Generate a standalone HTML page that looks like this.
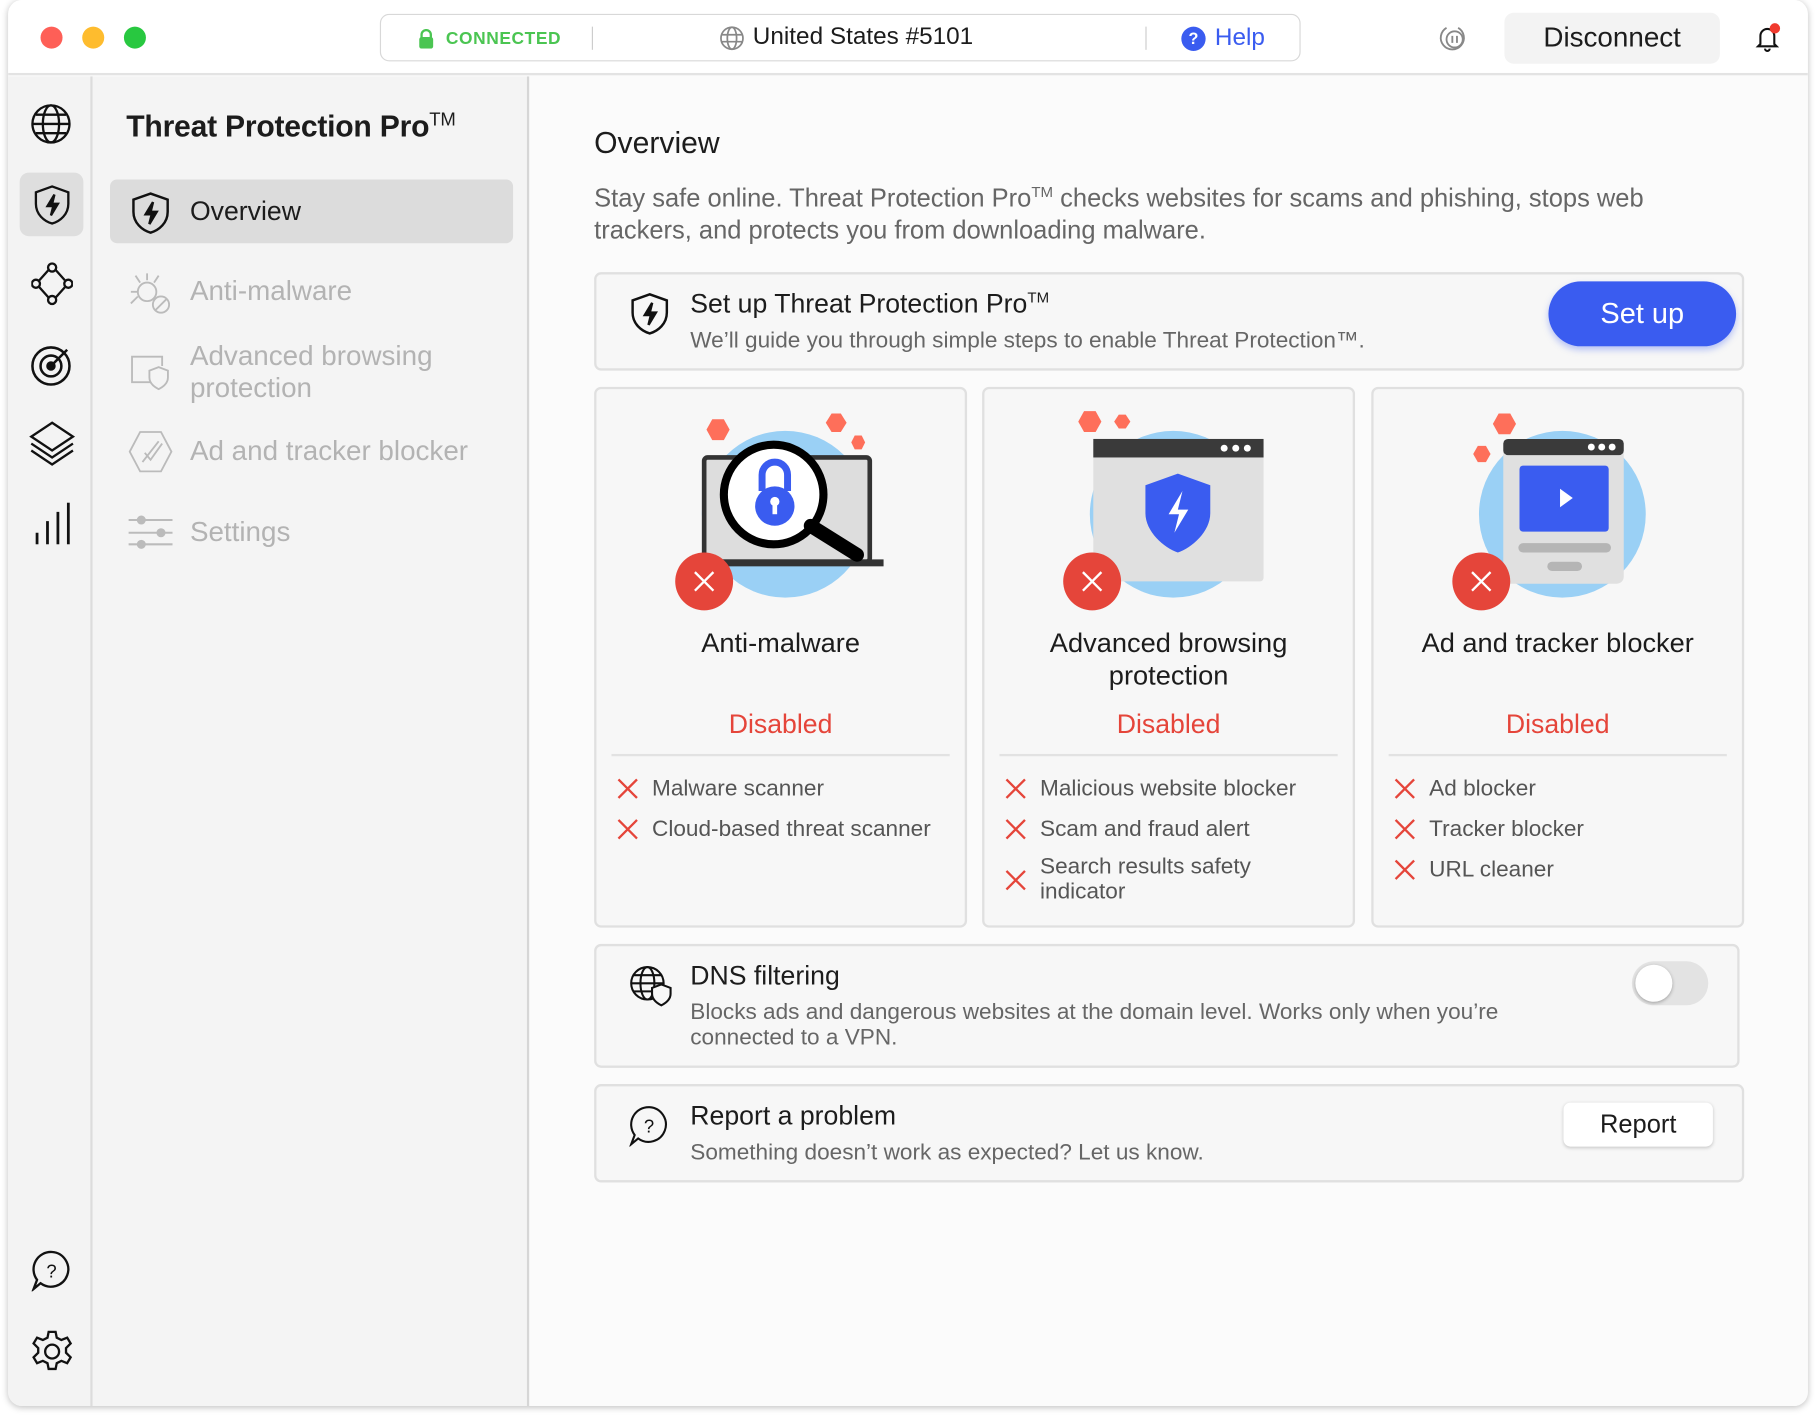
<!DOCTYPE html>
<html><head><meta charset="utf-8">
<style>
*{box-sizing:border-box;margin:0;padding:0}
html,body{width:1816px;height:1416px;overflow:hidden;background:#fff}
#s{position:absolute;left:0;top:0;width:1568px;height:1223px;transform:scale(1.15816);transform-origin:0 0;font-family:"Liberation Sans",sans-serif;color:#1c1c1c}
.win{position:absolute;left:7px;top:0;width:1554px;height:1214px;border-radius:12px;background:#fbfbfb;box-shadow:0 1px 6px rgba(0,0,0,.25);overflow:hidden}
.tb{position:absolute;left:0;top:0;width:100%;height:65px;background:#fff;border-bottom:2px solid #e3e3e3}
.dot{position:absolute;top:23px;width:19px;height:19px;border-radius:50%}
.pill{position:absolute;left:321px;top:12px;width:795px;height:41px;border:1px solid #d8d8d8;border-radius:8px;background:#fff}
.rail{position:absolute;left:0;top:66px;width:73px;bottom:0;background:#f3f3f3;border-right:2px solid #dcdcdc}
.side{position:absolute;left:73px;top:66px;width:377px;bottom:0;background:#f4f4f4;border-right:2px solid #d6d6d6}
.main{position:absolute;left:450px;top:66px;right:0;bottom:0;background:#fbfbfb}
.ab{position:absolute}
.si{position:absolute;left:30px;font-size:24px;color:#b3b3b3;line-height:28px}
.card{position:absolute;background:#f7f7f7;border:2px solid #e0e0e0;border-radius:6px}
.ft{position:absolute;left:0;width:100%;text-align:center;font-size:23.5px;line-height:28px}
.dis{position:absolute;left:0;width:100%;text-align:center;font-size:23px;color:#e5453a;top:276px}
.hr{position:absolute;left:13px;right:13px;top:315px;height:2px;background:#e2e2e2}
.li{position:absolute;left:48px;font-size:19.5px;color:#555;line-height:22px}
.x{position:absolute;left:18px;width:18px;height:18px}
</style></head><body><div id="s">
<div class="win">
<div class="tb">
 <div class="dot" style="left:28px;background:#fe5f57"></div>
 <div class="dot" style="left:64px;background:#febc2e"></div>
 <div class="dot" style="left:100px;background:#28c840"></div>
 <div class="pill">
  <svg class="ab" style="left:32px;top:12px" width="14" height="17" viewBox="0 0 14 17"><path d="M3 8V5a4 4 0 0 1 8 0v3" stroke="#4bc552" stroke-width="2" fill="none"/><rect x="1" y="7" width="12" height="10" rx="2" fill="#4bc552"/></svg>
  <div class="ab" style="left:56px;top:12px;font-size:15px;font-weight:bold;color:#4bc552;letter-spacing:.5px">CONNECTED</div>
  <div class="ab" style="left:182px;top:10px;width:1px;height:20px;background:#ccc"></div>
  <svg class="ab" style="left:292px;top:9px" width="22" height="22" viewBox="0 0 22 22" fill="none" stroke="#888" stroke-width="1.5"><circle cx="11" cy="11" r="9.5"/><ellipse cx="11" cy="11" rx="4" ry="9.5"/><path d="M2 8h18M2 14h18"/></svg>
  <div class="ab" style="left:321px;top:7px;font-size:21px">United States #5101</div>
  <div class="ab" style="left:660px;top:10px;width:1px;height:20px;background:#ccc"></div>
  <div class="ab" style="left:691px;top:10px;width:21px;height:21px;border-radius:50%;background:#3a5cf0;color:#fff;font-size:14px;font-weight:bold;text-align:center;line-height:21px">?</div>
  <div class="ab" style="left:720px;top:8px;font-size:21px;color:#3a5cf0">Help</div>
 </div>
 <svg class="ab" style="left:1234px;top:20px" width="28" height="26" viewBox="0 0 28 26" fill="none" stroke="#888" stroke-width="1.6"><path d="M8 4a10 10 0 1 0 10 0"/><circle cx="15" cy="14" r="7"/><path d="M13 11v6M17 11v6"/></svg>
 <div class="ab" style="left:1292px;top:11px;width:186px;height:44px;background:#f3f3f3;border-radius:8px;font-size:24px;text-align:center;line-height:44px">Disconnect</div>
 <svg class="ab" style="left:1508px;top:20px" width="24" height="26" viewBox="0 0 24 26" fill="none" stroke="#111" stroke-width="1.8"><path d="M5 18V11a6 6 0 0 1 12 0v7l2 2H3z"/><path d="M9 22a2 2 0 0 0 4 0"/></svg>
 <div class="ab" style="left:1521px;top:20px;width:9px;height:9px;border-radius:50%;background:#f03a2e"></div>
</div>
<div class="rail">
 <svg class="ab" style="left:19px;top:23px" width="36" height="36" viewBox="0 0 36 36" fill="none" stroke="#111" stroke-width="2"><circle cx="18" cy="18" r="16"/><ellipse cx="18" cy="18" rx="7" ry="16"/><path d="M2 18h32M5 10h26M5 26h26"/></svg>
 <div class="ab" style="left:10px;top:83px;width:55px;height:55px;border-radius:8px;background:#dedede"></div>
 <svg class="ab" style="left:22px;top:93px" width="32" height="36" viewBox="0 0 32 36" fill="none" stroke="#111" stroke-width="2"><path d="M16 2L30 7v10c0 9-7 15-14 17C9 32 2 26 2 17V7z"/><path d="M18 9l-6 10h5l-2 8 6-10h-5z" fill="#111"/></svg>
 <svg class="ab" style="left:20px;top:160px" width="36" height="38" viewBox="0 0 36 38" fill="none" stroke="#111" stroke-width="2"><circle cx="18" cy="5" r="3.5"/><circle cx="4" cy="19" r="3.5"/><circle cx="32" cy="19" r="3.5"/><circle cx="18" cy="33" r="3.5"/><path d="M15 7L7 16M21 7l8 9M7 22l8 9M29 22l-8 9"/></svg>
 <svg class="ab" style="left:19px;top:230px" width="38" height="38" viewBox="0 0 38 38" fill="none" stroke="#111" stroke-width="2.2"><circle cx="18" cy="20" r="16"/><circle cx="18" cy="20" r="9"/><circle cx="18" cy="20" r="3" fill="#111"/><path d="M18 20L32 6"/></svg>
 <svg class="ab" style="left:17px;top:296px" width="42" height="42" viewBox="0 0 42 42" fill="none" stroke="#111" stroke-width="2"><path d="M21 3L39 15 21 27 3 15z"/><path d="M3 21l18 12 18-12M3 27l18 12 18-12"/></svg>
 <svg class="ab" style="left:22px;top:368px" width="32" height="36" viewBox="0 0 32 36" stroke="#111" stroke-width="2.4"><path d="M3 36V26M12 36V16M21 36V8M30 36V0"/></svg>
 <svg class="ab" style="left:20px;top:1013px" width="36" height="36" viewBox="0 0 36 36" fill="none" stroke="#111" stroke-width="2"><path d="M18 2a15 15 0 1 1-10 27L2 34l3-8A15 15 0 0 1 18 2z"/><text x="13" y="24" font-size="16" font-family="Liberation Sans" fill="#111" stroke="none">?</text></svg>
 <svg class="ab" style="left:19px;top:1082px" width="38" height="38" viewBox="0 0 38 38" fill="none" stroke="#111" stroke-width="2"><circle cx="19" cy="19" r="6"/><path d="M16 2h6l1 5 4 2 5-2 3 5-4 4v4l4 4-3 5-5-2-4 2-1 5h-6l-1-5-4-2-5 2-3-5 4-4v-4l-4-4 3-5 5 2 4-2z"/></svg>
</div>
<div class="side">
 <div class="ab" style="left:29px;top:28px;font-size:26px;font-weight:bold;letter-spacing:-.2px">Threat Protection Pro<sup style="font-size:16px;font-weight:normal">TM</sup></div>
 <div class="ab" style="left:15px;top:89px;width:348px;height:55px;border-radius:6px;background:#dcdcdc"></div>
 <svg class="ab" style="left:33px;top:99px" width="34" height="38" viewBox="0 0 32 36" fill="none" stroke="#111" stroke-width="2"><path d="M16 2L30 7v10c0 9-7 15-14 17C9 32 2 26 2 17V7z"/><path d="M18 9l-6 10h5l-2 8 6-10h-5z" fill="#111"/></svg>
 <div class="ab" style="left:84px;top:103px;font-size:23px">Overview</div>
 <svg class="ab" style="left:32px;top:166px" width="36" height="40" viewBox="0 0 36 40" fill="none" stroke="#bbb" stroke-width="1.6"><circle cx="15" cy="20" r="8"/><path d="M15 4v6M5 6l4 6M25 6l-4 6M1 30l6-6M1 20h6"/><circle cx="27" cy="31" r="7" fill="#f4f4f4"/><path d="M22 36l10-10"/></svg>
 <div class="si" style="left:84px;top:172px">Anti-malware</div>
 <svg class="ab" style="left:32px;top:238px" width="36" height="34" viewBox="0 0 36 34" fill="none" stroke="#bbb" stroke-width="1.6"><path d="M18 26H2V4h26v8"/><path d="M25 13l8 3v6c0 5-4 8-8 10-4-2-8-5-8-10v-6z"/></svg>
 <div class="si" style="left:84px;top:228px">Advanced browsing<br>protection</div>
 <svg class="ab" style="left:31px;top:305px" width="38" height="38" viewBox="0 0 38 38" fill="none" stroke="#bbb" stroke-width="1.6"><path d="M10 2h18l9 17-9 17H10L1 19z"/><path d="M12 28l14-18M14 20l5 6 10-14"/></svg>
 <div class="si" style="left:84px;top:310px">Ad and tracker blocker</div>
 <svg class="ab" style="left:31px;top:377px" width="38" height="32" viewBox="0 0 38 32" fill="none" stroke="#bbb" stroke-width="1.8"><path d="M0 6h38M0 17h38M0 27h38"/><circle cx="11" cy="6" r="3" fill="#bbb"/><circle cx="28" cy="17" r="3" fill="#bbb"/><circle cx="11" cy="27" r="3" fill="#bbb"/></svg>
 <div class="si" style="left:84px;top:380px">Settings</div>
</div>
<div class="main">
 <div class="ab" style="left:56px;top:42px;font-size:26px">Overview</div>
 <div class="ab" style="left:56px;top:86px;width:990px;font-size:22px;line-height:28px;color:#666">Stay safe online. Threat Protection Pro<sup style="font-size:13px">TM</sup> checks websites for scams and phishing, stops web trackers, and protects you from downloading malware.</div>
 <div class="card" style="left:56px;top:169px;width:993px;height:85px">
  <svg class="ab" style="left:28px;top:15px" width="36" height="38" viewBox="0 0 32 36" fill="none" stroke="#111" stroke-width="2"><path d="M16 2L30 7v10c0 9-7 15-14 17C9 32 2 26 2 17V7z"/><path d="M18 9l-6 10h5l-2 8 6-10h-5z" fill="#111"/></svg>
  <div class="ab" style="left:81px;top:12px;font-size:23px">Set up Threat Protection Pro<sup style="font-size:13px">TM</sup></div>
  <div class="ab" style="left:81px;top:46px;font-size:19.5px;color:#666">We’ll guide you through simple steps to enable Threat Protection™.</div>
  <div class="ab" style="left:822px;top:6px;width:162px;height:56px;border-radius:28px;background:#3a5cf0;color:#fff;font-size:25px;text-align:center;line-height:56px;box-shadow:0 3px 6px rgba(58,92,240,.35)">Set up</div>
 </div>
 <!-- cards -->
 <div class="card" style="left:56px;top:268px;width:322px;height:467px">
  <svg class="ab" style="left:68px;top:18px" width="180" height="175" viewBox="0 0 180 175"><circle cx="95" cy="90" r="72" fill="#9ad0f5"/><polygon points="32,8 42,8 47,17 42,26 32,26 27,17" fill="#fe6f5a"/><polygon points="135,3 143,3 148,11 143,19 135,19 130,11" fill="#fe6f5a"/><polygon points="155,22 161,22 164,28 161,34 155,34 152,28" fill="#fe6f5a"/><rect x="25" y="41" width="143" height="90" rx="3" fill="#ddd" stroke="#333" stroke-width="4"/><rect x="20" y="129" width="160" height="6" fill="#333"/><circle cx="85" cy="73" r="43" fill="#fff" stroke="#000" stroke-width="7"/><path d="M117 100l40 25" stroke="#000" stroke-width="12" stroke-linecap="round"/><path d="M75 70v-14a11 11 0 0 1 22 0v14" stroke="#3a5cf0" stroke-width="6" fill="none"/><circle cx="86" cy="83" r="17" fill="#3a5cf0"/><circle cx="86" cy="79" r="4" fill="#fff"/><rect x="84" y="80" width="4" height="10" fill="#fff"/></svg>
  <div class="ab" style="left:68px;top:141px;width:50px;height:50px;border-radius:50%;background:#e5453a"></div>
  <svg class="ab" style="left:84px;top:157px" width="18" height="18"><path d="M1 1l16 16M17 1L1 17" stroke="#fff" stroke-width="2"/></svg>
  <div class="ft" style="top:205px">Anti-malware</div>
  <div class="dis">Disabled</div><div class="hr"></div>
  <svg class="x" style="top:336px"><path d="M1 1l16 16M17 1L1 17" stroke="#e5453a" stroke-width="2"/></svg><div class="li" style="top:334px">Malware scanner</div>
  <svg class="x" style="top:371px"><path d="M1 1l16 16M17 1L1 17" stroke="#e5453a" stroke-width="2"/></svg><div class="li" style="top:369px">Cloud-based threat scanner</div>
 </div>
 <div class="card" style="left:391px;top:268px;width:322px;height:467px">
  <svg class="ab" style="left:68px;top:18px" width="180" height="175" viewBox="0 0 180 175"><circle cx="95" cy="90" r="72" fill="#9ad0f5"/><polygon points="18,1 28,1 33,10 28,19 18,19 13,10" fill="#fe6f5a"/><polygon points="48,4 54,4 58,10 54,16 48,16 44,10" fill="#fe6f5a"/><rect x="26" y="25" width="147" height="123" rx="3" fill="#e0e0e0"/><rect x="26" y="25" width="147" height="16" fill="#3a3a3a"/><circle cx="139" cy="33" r="3" fill="#fff"/><circle cx="149" cy="33" r="3" fill="#fff"/><circle cx="159" cy="33" r="3" fill="#fff"/><path d="M99 55l28 10v24c0 16-16 30-28 34-12-4-28-18-28-34V65z" fill="#3a5cf0"/><path d="M103 70l-12 20h9l-4 16 12-20h-9z" fill="#fff"/></svg>
  <div class="ab" style="left:68px;top:141px;width:50px;height:50px;border-radius:50%;background:#e5453a"></div>
  <svg class="ab" style="left:84px;top:157px" width="18" height="18"><path d="M1 1l16 16M17 1L1 17" stroke="#fff" stroke-width="2"/></svg>
  <div class="ft" style="top:205px">Advanced browsing<br>protection</div>
  <div class="dis">Disabled</div><div class="hr"></div>
  <svg class="x" style="top:336px"><path d="M1 1l16 16M17 1L1 17" stroke="#e5453a" stroke-width="2"/></svg><div class="li" style="top:334px">Malicious website blocker</div>
  <svg class="x" style="top:371px"><path d="M1 1l16 16M17 1L1 17" stroke="#e5453a" stroke-width="2"/></svg><div class="li" style="top:369px">Scam and fraud alert</div>
  <svg class="x" style="top:415px"><path d="M1 1l16 16M17 1L1 17" stroke="#e5453a" stroke-width="2"/></svg><div class="li" style="top:401px">Search results safety<br>indicator</div>
 </div>
 <div class="card" style="left:727px;top:268px;width:322px;height:467px">
  <svg class="ab" style="left:68px;top:18px" width="180" height="175" viewBox="0 0 180 175"><circle cx="95" cy="90" r="72" fill="#9ad0f5"/><polygon points="40,3 50,3 55,12 50,21 40,21 35,12" fill="#fe6f5a"/><polygon points="22,31 29,31 33,38 29,45 22,45 18,38" fill="#fe6f5a"/><rect x="44" y="25" width="104" height="125" rx="6" fill="#e0e0e0"/><rect x="44" y="25" width="104" height="14" rx="4" fill="#3a3a3a"/><circle cx="120" cy="32" r="3" fill="#fff"/><circle cx="129" cy="32" r="3" fill="#fff"/><circle cx="138" cy="32" r="3" fill="#fff"/><rect x="58" y="48" width="77" height="57" rx="3" fill="#3a5cf0"/><path d="M93 68l11 8-11 8z" fill="#fff"/><rect x="57" y="115" width="80" height="8" rx="4" fill="#b5b5b5"/><rect x="82" y="131" width="30" height="8" rx="4" fill="#b5b5b5"/></svg>
  <div class="ab" style="left:68px;top:141px;width:50px;height:50px;border-radius:50%;background:#e5453a"></div>
  <svg class="ab" style="left:84px;top:157px" width="18" height="18"><path d="M1 1l16 16M17 1L1 17" stroke="#fff" stroke-width="2"/></svg>
  <div class="ft" style="top:205px">Ad and tracker blocker</div>
  <div class="dis">Disabled</div><div class="hr"></div>
  <svg class="x" style="top:336px"><path d="M1 1l16 16M17 1L1 17" stroke="#e5453a" stroke-width="2"/></svg><div class="li" style="top:334px">Ad blocker</div>
  <svg class="x" style="top:371px"><path d="M1 1l16 16M17 1L1 17" stroke="#e5453a" stroke-width="2"/></svg><div class="li" style="top:369px">Tracker blocker</div>
  <svg class="x" style="top:406px"><path d="M1 1l16 16M17 1L1 17" stroke="#e5453a" stroke-width="2"/></svg><div class="li" style="top:404px">URL cleaner</div>
 </div>
 <div class="card" style="left:56px;top:749px;width:989px;height:107px">
  <svg class="ab" style="left:28px;top:16px" width="38" height="36" viewBox="0 0 38 36" fill="none" stroke="#111" stroke-width="1.8"><circle cx="16" cy="16" r="14"/><ellipse cx="16" cy="16" rx="6" ry="14"/><path d="M2 16h28M4 9h24M4 23h18"/><path d="M28 17l8 3v5c0 5-4 8-8 10-4-2-8-5-8-10v-5z" fill="#f7f7f7"/></svg>
  <div class="ab" style="left:81px;top:12px;font-size:23px">DNS filtering</div>
  <div class="ab" style="left:81px;top:46px;width:740px;font-size:19.5px;line-height:22px;color:#666">Blocks ads and dangerous websites at the domain level. Works only when you’re connected to a VPN.</div>
  <div class="ab" style="left:894px;top:13px;width:66px;height:38px;border-radius:19px;background:#e3e3e3"><div class="ab" style="left:3px;top:3px;width:32px;height:32px;border-radius:50%;background:#fff;box-shadow:0 1px 3px rgba(0,0,0,.3)"></div></div>
 </div>
 <div class="card" style="left:56px;top:870px;width:993px;height:85px">
  <svg class="ab" style="left:28px;top:16px" width="36" height="36" viewBox="0 0 36 36" fill="none" stroke="#111" stroke-width="1.8"><path d="M18 2a15 15 0 1 1-10 27L2 34l3-8A15 15 0 0 1 18 2z"/><text x="13" y="24" font-size="16" font-family="Liberation Sans" fill="#111" stroke="none">?</text></svg>
  <div class="ab" style="left:81px;top:12px;font-size:23px">Report a problem</div>
  <div class="ab" style="left:81px;top:46px;font-size:19.5px;color:#666">Something doesn’t work as expected? Let us know.</div>
  <div class="ab" style="left:835px;top:14px;width:129px;height:38px;border-radius:6px;background:#fff;box-shadow:0 1px 3px rgba(0,0,0,.2);font-size:22px;text-align:center;line-height:38px">Report</div>
 </div>
</div>
</div>
</div></body></html>
